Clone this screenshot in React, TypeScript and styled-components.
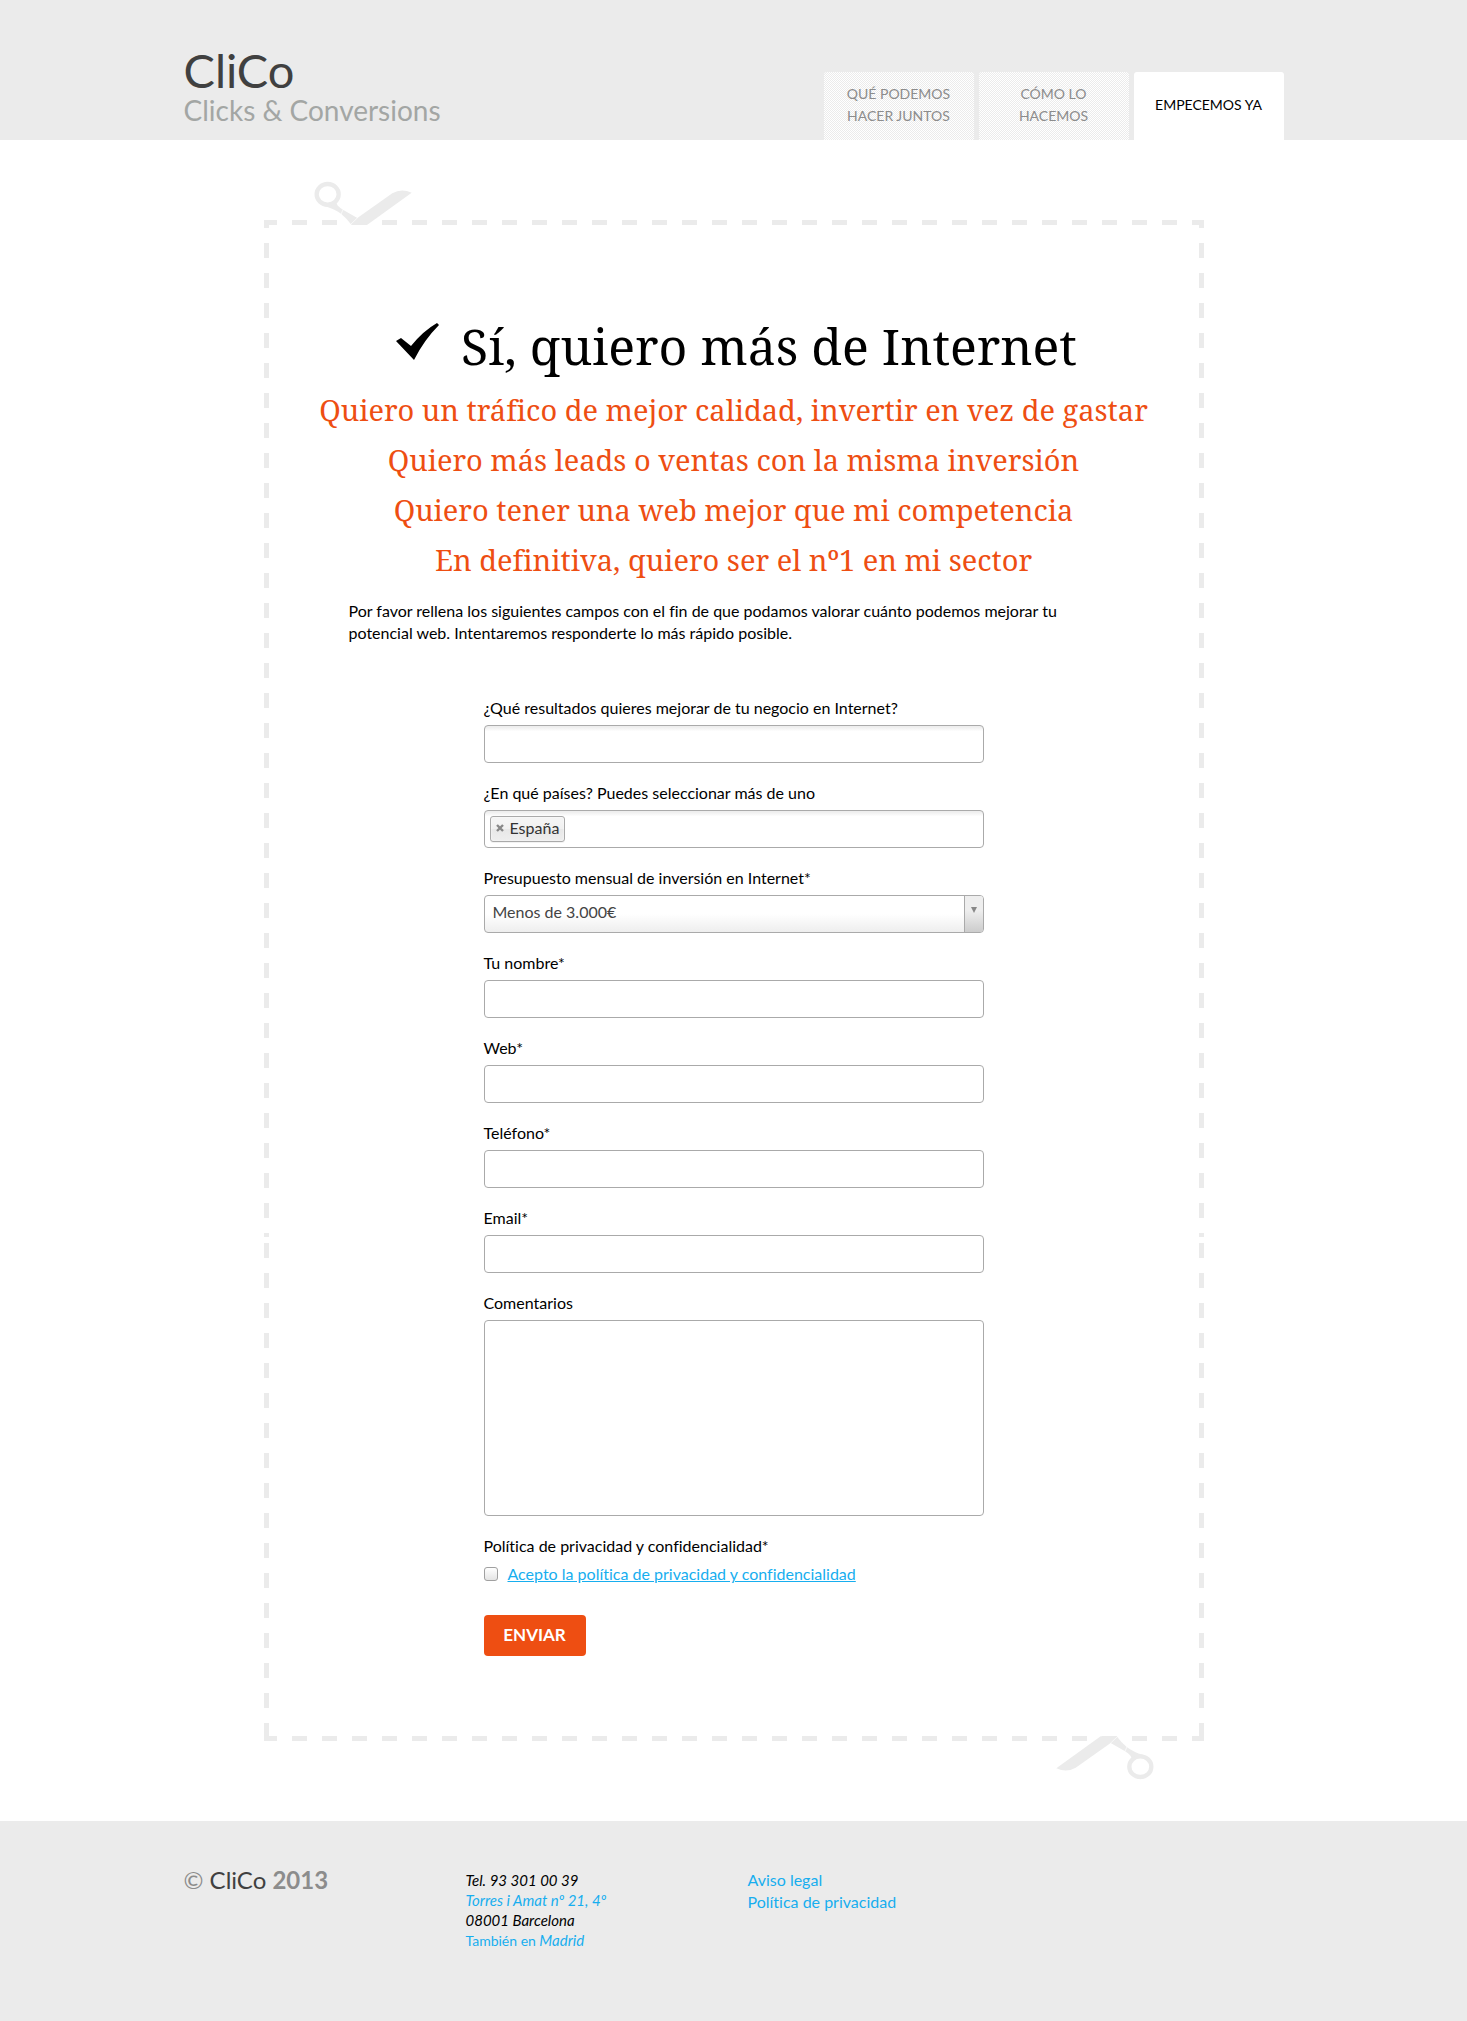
import React, { useState } from "react";
import styled, { createGlobalStyle } from "styled-components";

const sans = `Lato, "Liberation Sans", sans-serif`;
const slab = `"Noto Serif", "DejaVu Serif Condensed", "DejaVu Serif", serif`;
const grey = "#ebebeb";
const orange = "#ee4e12";
const blue = "#17aeef";

const GlobalStyle = createGlobalStyle`
  *, *::before, *::after { box-sizing: border-box; }
  body {
    margin: 0;
    background: #fff;
    color: #000;
    font-family: ${sans};
    font-size: 16px;
    line-height: 22px;
    font-variant-ligatures: no-common-ligatures;
  }
`;

const Container = styled.div`
  width: 100%;
  max-width: 1100px;
  margin: 0 auto;
`;

const Header = styled.header`
  background: ${grey};
`;

const HeaderRow = styled(Container)`
  display: flex;
  justify-content: space-between;
  align-items: flex-end;
  flex-wrap: wrap;
  padding-top: 44px;
`;

const Brand = styled.a`
  display: block;
  padding-bottom: 15px;
  color: #404040;
  text-decoration: none;
`;

const BrandName = styled.span`
  display: block;
  font-size: 47px;
  line-height: 52px;
`;

const BrandTagline = styled.span`
  display: block;
  font-size: 28px;
  line-height: 29px;
  color: #a3a6a4;
`;

const Nav = styled.nav`
  display: flex;
  gap: 5px;
`;

const Tab = styled.a<{ $active?: boolean }>`
  display: flex;
  align-items: center;
  justify-content: center;
  width: 150px;
  height: 68px;
  padding: 0 20px 2px;
  border-radius: 3px 3px 0 0;
  background: ${(p) =>
    p.$active ? "#fff" : `repeating-conic-gradient(#fff 0 25%, ${grey} 0 50%) 0 0 / 2px 2px`};
  color: ${(p) => (p.$active ? "#000" : "#8c8c8c")};
  font-size: 14px;
  text-align: center;
  text-transform: uppercase;
  text-decoration: none;
`;

const Main = styled.main`
  padding: 80px 0;
`;

const dash = (angle: string) => `linear-gradient(${angle}, ${grey} 15px, transparent 15px)`;

const Coupon = styled.section`
  position: relative;
  max-width: 940px;
  margin: 0 auto;
  padding: 96px 0 85px;
  background:
    ${dash("90deg")} -2px 0 / 30px 5px repeat-x,
    ${dash("90deg")} -2px 100% / 30px 5px repeat-x;

  &::before,
  &::after {
    content: "";
    position: absolute;
    left: 0;
    right: 0;
    pointer-events: none;
  }
  &::before {
    top: 0;
    bottom: 504px;
    background:
      ${dash("180deg")} 0 -7px / 5px 30px repeat-y,
      ${dash("180deg")} 100% -7px / 5px 30px repeat-y;
  }
  &::after {
    bottom: 0;
    height: 504px;
    background:
      ${dash("180deg")} 0 6px / 5px 30px repeat-y,
      ${dash("180deg")} 100% 6px / 5px 30px repeat-y;
  }
`;

const ScissorsSvg = styled.svg<{ $flipped?: boolean }>`
  position: absolute;
  width: 98px;
  height: 45px;
  ${(p) => (p.$flipped ? "right: 50px; bottom: -40px; transform: rotate(180deg);" : "left: 50px; top: -40px;")}
`;

function Scissors({ flipped }: { flipped?: boolean }) {
  return (
    <ScissorsSvg $flipped={flipped} viewBox="190 30 294 135" aria-hidden="true">
      <ellipse cx="231" cy="73" rx="33" ry="31" fill="none" stroke={grey} strokeWidth="13" />
      <path
        d="M222 108 Q252 117 272 132 Q288 145 302 164 L350 164 L483 68 Q452 54 425 70 L320 144 L278 120 Q255 106 258 97 L246 105 Z"
        fill={grey}
      />
      <path d="M277 119 L271 133 M301 162 L321 143" stroke="#fff" strokeWidth="2" />
    </ScissorsSvg>
  );
}

const Title = styled.h1`
  display: flex;
  justify-content: center;
  gap: 22px;
  margin: 0 0 9px;
  padding-left: 6px;
  font-family: ${slab};
  font-size: 50px;
  font-weight: 400;
  line-height: 60px;
`;

const CheckMark = styled.svg`
  flex: none;
  width: 43px;
  height: 38px;
  margin-top: 7px;
`;

const Claim = styled.h2`
  margin: 0;
  color: ${orange};
  font-family: ${slab};
  font-size: 29px;
  font-weight: 440;
  line-height: 50px;
  text-align: center;
`;

const Intro = styled.p`
  margin: 15px 85px 53px;
`;

const Form = styled.form`
  display: flex;
  flex-direction: column;
  align-items: stretch;
  gap: 19px;
  max-width: 500px;
  margin: 0 auto;
`;

const Field = styled.div`
  display: flex;
  flex-direction: column;
  gap: 6px;
`;

const control = `
  width: 100%;
  border: 1px solid #aaa;
  border-radius: 4px;
  background: #fff;
  color: #444;
  font-family: ${sans};
  font-size: 16px;
`;

const innerShade = "linear-gradient(#eee 1px, #fff 15%)";

const TextInput = styled.input<{ $shaded?: boolean }>`
  ${control}
  height: 38px;
  padding: 0 8px;
  ${(p) => p.$shaded && `background: ${innerShade};`}
`;

const TextArea = styled.textarea`
  ${control}
  display: block;
  height: 196px;
  padding: 8px;
  resize: none;
`;

const TokenBox = styled.div`
  ${control}
  display: flex;
  align-items: center;
  height: 38px;
  padding: 0 5px;
  gap: 5px;
  background: ${innerShade};
`;

const Token = styled.span`
  display: flex;
  align-items: center;
  gap: 6px;
  height: 26px;
  padding: 0 5px 3px;
  border: 1px solid #aaa;
  border-radius: 3px;
  background: linear-gradient(#f4f4f4 20%, #f0f0f0 50%, #e8e8e8 52%, #eee 100%);
  box-shadow: 0 0 2px #fff inset, 0 1px 0 rgba(0, 0, 0, 0.05);
  color: #333;
`;

const TokenRemove = styled.button`
  display: flex;
  padding: 0;
  border: 0;
  background: none;
  cursor: pointer;
`;

const TokenInput = styled.input`
  flex: 1;
  min-width: 0;
  border: 0;
  outline: 0;
  background: transparent;
  font-family: ${sans};
  font-size: 16px;
`;

const SelectBox = styled.div`
  ${control}
  display: grid;
  grid-template-columns: 1fr 19px;
  height: 38px;
  overflow: hidden;
  background: linear-gradient(#fff 50%, #eee 100%);
`;

const Select = styled.select`
  grid-area: 1 / 1 / 2 / 3;
  appearance: none;
  padding: 0 28px 6px 8px;
  border: 0;
  background: transparent;
  color: #444;
  font-family: ${sans};
  font-size: 16px;
`;

const SelectArrow = styled.span`
  grid-area: 1 / 2;
  display: flex;
  justify-content: center;
  padding-top: 11px;
  border-left: 1px solid #aaa;
  background: linear-gradient(#eee 40%, #ccc 100%);
  pointer-events: none;
`;

const CheckRow = styled.div`
  display: flex;
  align-items: center;
  gap: 10px;
`;

const CheckBox = styled.input`
  appearance: none;
  width: 14px;
  height: 14px;
  margin: 0;
  border: 1px solid #a0a0a0;
  border-radius: 3px;
  background: linear-gradient(#fff, #e4e4e4);
  &:checked { background: ${blue}; }
`;

const Link = styled.a<{ $underlined?: boolean }>`
  color: ${blue};
  text-decoration: ${(p) => (p.$underlined ? "underline" : "none")};
`;

const Submit = styled.button`
  align-self: flex-start;
  width: 102px;
  height: 41px;
  margin-top: 11px;
  padding: 0 0 2px;
  border: 0;
  border-radius: 4px;
  background: ${orange};
  color: #fff;
  font-family: ${sans};
  font-size: 17px;
  font-weight: 700;
  cursor: pointer;
`;

const Footer = styled.footer`
  min-height: 200px;
  background: ${grey};
`;

const FooterRow = styled(Container)`
  display: grid;
  grid-template-columns: repeat(auto-fit, 252px);
  column-gap: 30px;
  padding-top: 48px;
`;

const Copyright = styled.p`
  margin: 0;
  color: #8c8c8c;
  font-size: 24px;
  font-weight: 400;
  line-height: 22px;
  span { color: #404040; }
  strong { font-weight: 700; }
`;

const Address = styled.address`
  padding-top: 1px;
  font-size: 15px;
  line-height: 20px;
`;

const Upright = styled.span`
  font-style: normal;
  font-size: 14px;
`;

const Links = styled.div`
  display: flex;
  flex-direction: column;
  align-items: flex-start;
`;

const claims = [
  "Quiero un tráfico de mejor calidad, invertir en vez de gastar",
  "Quiero más leads o ventas con la misma inversión",
  "Quiero tener una web mejor que mi competencia",
  "En definitiva, quiero ser el nº1 en mi sector",
];

const plainFields = [
  { id: "nombre", label: "Tu nombre*", type: "text" },
  { id: "web", label: "Web*", type: "text" },
  { id: "telefono", label: "Teléfono*", type: "tel" },
  { id: "email", label: "Email*", type: "email" },
];

export default function App() {
  const [countries, setCountries] = useState(["España"]);

  return (
    <>
      <GlobalStyle />
      <Header>
        <HeaderRow>
          <Brand href="#">
            <BrandName>CliCo</BrandName>
            <BrandTagline>Clicks &amp; Conversions</BrandTagline>
          </Brand>
          <Nav>
            <Tab href="#que">Qué podemos hacer juntos</Tab>
            <Tab href="#como">Cómo lo hacemos</Tab>
            <Tab href="#empecemos" $active>Empecemos ya</Tab>
          </Nav>
        </HeaderRow>
      </Header>

      <Main>
        <Coupon>
          <Scissors />
          <Title>
            <CheckMark viewBox="0 0 43 38" aria-hidden="true">
              <path d="M0 18 L5 15 L15 23 Q27 8 41 0 L43 2 Q28 17 18 37 Z" fill="#000" />
            </CheckMark>
            Sí, quiero más de Internet
          </Title>
          {claims.map((text) => (
            <Claim key={text}>{text}</Claim>
          ))}
          <Intro>
            Por favor rellena los siguientes campos con el fin de que podamos valorar cuánto podemos mejorar tu
            potencial web. Intentaremos responderte lo más rápido posible.
          </Intro>

          <Form onSubmit={(e) => e.preventDefault()}>
            <Field>
              <label htmlFor="resultados">¿Qué resultados quieres mejorar de tu negocio en Internet?</label>
              <TextInput id="resultados" $shaded />
            </Field>
            <Field>
              <label htmlFor="paises">¿En qué países? Puedes seleccionar más de uno</label>
              <TokenBox>
                {countries.map((name) => (
                  <Token key={name}>
                    <TokenRemove
                      type="button"
                      aria-label={`Quitar ${name}`}
                      onClick={() => setCountries(countries.filter((c) => c !== name))}
                    >
                      <svg width="8" height="8" viewBox="0 0 8 8" aria-hidden="true">
                        <path d="M1 1 L7 7 M7 1 L1 7" stroke="#888" strokeWidth="2.4" />
                      </svg>
                    </TokenRemove>
                    {name}
                  </Token>
                ))}
                <TokenInput id="paises" />
              </TokenBox>
            </Field>
            <Field>
              <label htmlFor="presupuesto">Presupuesto mensual de inversión en Internet*</label>
              <SelectBox>
                <SelectArrow>
                  <svg width="6" height="6" viewBox="0 0 6 6" aria-hidden="true">
                    <path d="M0 0 H6 L3 6 Z" fill="#888" />
                  </svg>
                </SelectArrow>
                <Select id="presupuesto">
                  <option>Menos de 3.000€</option>
                </Select>
              </SelectBox>
            </Field>
            {plainFields.map((f) => (
              <Field key={f.id}>
                <label htmlFor={f.id}>{f.label}</label>
                <TextInput id={f.id} type={f.type} />
              </Field>
            ))}
            <Field>
              <label htmlFor="comentarios">Comentarios</label>
              <TextArea id="comentarios" />
            </Field>
            <Field>
              <label htmlFor="politica">Política de privacidad y confidencialidad*</label>
              <CheckRow>
                <CheckBox id="politica" type="checkbox" />
                <Link href="#politica-de-privacidad" $underlined>
                  Acepto la política de privacidad y confidencialidad
                </Link>
              </CheckRow>
            </Field>
            <Submit type="submit">ENVIAR</Submit>
          </Form>
          <Scissors flipped />
        </Coupon>
      </Main>

      <Footer>
        <FooterRow>
          <Copyright>
            © <span>CliCo</span> <strong>2013</strong>
          </Copyright>
          <Address>
            Tel. 93 301 00 39
            <br />
            <Link href="#barcelona">Torres i Amat nº 21, 4º</Link>
            <br />
            08001 Barcelona
            <br />
            <Link href="#madrid">
              <Upright>También en</Upright> Madrid
            </Link>
          </Address>
          <Links>
            <Link href="#aviso-legal">Aviso legal</Link>
            <Link href="#privacidad">Política de privacidad</Link>
          </Links>
        </FooterRow>
      </Footer>
    </>
  );
}
